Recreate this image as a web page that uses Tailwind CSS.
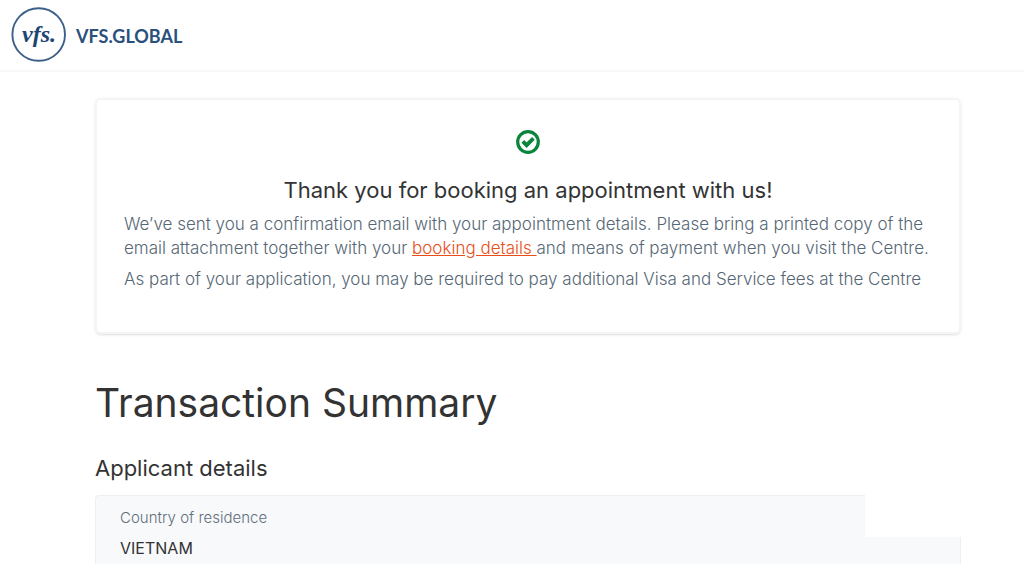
<!DOCTYPE html>
<html lang="en">
<head>
<meta charset="utf-8">
<meta name="viewport" content="width=device-width, initial-scale=1">
<title>Appointment confirmation - VFS.GLOBAL</title>
<script src="https://cdn.jsdelivr.net/npm/@tailwindcss/browser@4"></script>
</head>
<body class="flex min-h-screen flex-col bg-white font-[Inter,sans-serif] text-[#333333]">
<header class="flex items-center gap-2.5 border-b-2 border-[#f8f8f8] px-2.5 pt-1.5 pb-2">
  <svg class="size-14" viewBox="0 0 56 56" role="img" aria-label="vfs.">
    <circle cx="28.7" cy="28.5" r="26.3" fill="none" stroke="#3c6089" stroke-width="1.9"/>
    <text x="12" y="36" font-family="Liberation Serif, serif" font-style="italic" font-weight="700" font-size="24" fill="#1d4673">vfs.</text>
  </svg>
  <span class="pt-1 font-[Lato,sans-serif] text-lg font-bold text-[#2a507c]">VFS.GLOBAL</span>
</header>
<main class="flex flex-1 flex-col pt-[26px] pr-[63px] pl-[95px]">
  <section class="flex flex-col items-center rounded-md border-2 border-[#f3f4f6] px-[27px] pt-[30px] pb-[41px] shadow-sm">
    <svg class="size-6" viewBox="0 0 24 24" fill="none" stroke="#0b853b" aria-hidden="true">
      <circle cx="12" cy="12" r="10.3" stroke-width="3.2"/>
      <path d="M6.8 11.4l3.8 3.8 6.8-6.8" stroke-width="3.8"/>
    </svg>
    <h2 class="mt-5 text-[22px] leading-8">Thank you for booking an appointment with us!</h2>
    <div class="mt-1.5 w-full text-[17px] leading-6 font-light text-[#566775]">
      <p>We’ve sent you a confirmation email with your appointment details. Please bring a printed copy of the email attachment together with your <a href="#details" class="text-[#e84e18] underline">booking details </a>and means of payment when you visit the Centre.</p>
      <p class="mt-[7px]">As part of your application, you may be required to pay additional Visa and Service fees at the Centre</p>
    </div>
  </section>
  <h1 class="mt-11 text-[39px] leading-[50px]">Transaction Summary</h1>
  <h2 id="details" class="mt-6 text-[22px] leading-8">Applicant details</h2>
  <section class="relative mt-[11px] flex-1 rounded-t-sm border-x border-t border-[#eeeff1] bg-[#f8f9fb] px-6 pt-3">
    <div class="absolute -top-px -right-px h-[42px] w-24 bg-white"></div>
    <dl>
      <dt class="text-[15px] leading-5 font-light text-[#5f6f7c]">Country of residence</dt>
      <dd class="mt-2 text-base leading-6">VIETNAM</dd>
    </dl>
  </section>
</main>
</body>
</html>
